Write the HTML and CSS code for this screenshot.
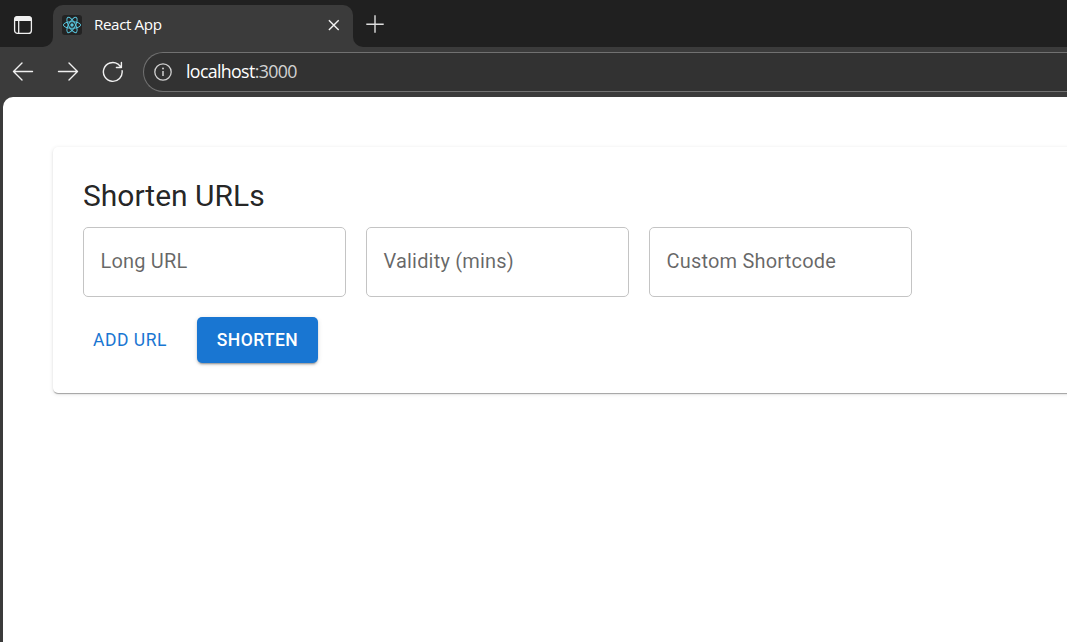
FILE: index.html
```
<!DOCTYPE html>
<html lang="en">
<head>
<meta charset="utf-8">
<title>React App</title>
<link rel="stylesheet" href="styles.css">
</head>
<body>
<div class="browser">
  <header class="tabstrip">
    <div class="tabstrip-start">
      <svg width="20" height="20" viewBox="0 0 20 20" fill="none" stroke="#f0f0f0" stroke-width="1.3">
        <rect x="1.6" y="1.6" width="16.8" height="16.8" rx="3"/>
        <path d="M2 2.8Q2.6 1.8 4 1.8H16Q17.6 1.8 18 3V5.4H2Z" fill="#f0f0f0"/>
        <path d="M5.7 6V18"/>
      </svg>
    </div>
    <div class="tab">
      <span class="favicon">
        <svg width="20" height="20" viewBox="0 0 20 20" fill="none" stroke="#58c4dc" stroke-width="1">
          <ellipse cx="10" cy="10" rx="8.6" ry="3.3"/>
          <ellipse cx="10" cy="10" rx="8.6" ry="3.3" transform="rotate(60 10 10)"/>
          <ellipse cx="10" cy="10" rx="8.6" ry="3.3" transform="rotate(120 10 10)"/>
          <circle cx="10" cy="10" r="1.7" fill="#58c4dc" stroke="none"/>
        </svg>
      </span>
      <span class="tab-title">React App</span>
      <svg width="12" height="12" viewBox="0 0 12 12" fill="none" stroke="#f2f2f2" stroke-width="1.4"><path d="M.9 1.2L10.7 11M10.7 1.2L.9 11"/></svg>
    </div>
    <div class="tabstrip-end">
      <svg width="18" height="18" viewBox="0 0 18 18" fill="none" stroke="#dedede" stroke-width="1.4"><path d="M9 .3V17.7M.3 9.3H17.7"/></svg>
    </div>
  </header>
  <nav class="toolbar">
    <svg width="22" height="20" viewBox="0 0 22 20" fill="none" stroke="#f0f0f0" stroke-width="1.4" stroke-linecap="round" stroke-linejoin="round"><path d="M20.5 9.5H1.5M10 1.1L1.5 9.5L10 17.9"/></svg>
    <svg width="22" height="20" viewBox="0 0 22 20" fill="none" stroke="#f0f0f0" stroke-width="1.4" stroke-linecap="round" stroke-linejoin="round"><path d="M1.5 9.5H20.5M12 1.1L20.5 9.5L12 17.9"/></svg>
    <svg width="22" height="22" viewBox="0 0 22 22" fill="none" stroke="#f0f0f0" stroke-width="1.4" stroke-linecap="round" stroke-linejoin="round"><path d="M20.1 9.6A9.4 9.4 0 1 1 16 3.1L19.2 6.3M19.4 1.5V6.5H14.4"/></svg>
    <div class="address">
      <svg width="18" height="18" viewBox="0 0 18 18" fill="none" stroke="#d0d0d0" stroke-width="1.3"><circle cx="9" cy="9" r="8.2"/><path d="M9 8V13" stroke-width="1.5"/><circle cx="9" cy="5.6" r="1" fill="#d0d0d0" stroke="none"/></svg>
      <span class="url">localhost<span class="port">:3000</span></span>
    </div>
  </nav>
  <main class="page">
    <section class="card">
      <h1 class="title">Shorten URLs</h1>
      <div class="fields">
        <div class="field"><span>Long URL</span></div>
        <div class="field"><span>Validity (mins)</span></div>
        <div class="field"><span>Custom Shortcode</span></div>
      </div>
      <div class="actions">
        <button class="btn btn-text">Add URL</button>
        <button class="btn btn-primary">Shorten</button>
      </div>
    </section>
  </main>
</div>
</body>
</html>
```
FILE: styles.css
```
* { box-sizing: border-box; }
body { margin: 0; overflow: hidden; font-family: Roboto, "Liberation Sans", sans-serif; }
svg { display: block; flex: none; }

.browser { display: flex; flex-direction: column; height: 642px; background: #3b3b3b; overflow: hidden; }

.tabstrip { display: flex; flex: none; height: 47px; background: linear-gradient(#202020 0 20px, #3b3b3b 20px); }
.tabstrip-start { width: 53px; padding: 15px 0 0 13px; background: #202020; border-bottom-right-radius: 10px; }
.tab {
  display: flex; align-items: center; width: 300px; margin-top: 5px; padding: 0 13px 2px 9px;
  background: #3b3b3b; border-radius: 10px 10px 0 0;
}
.favicon { width: 20px; height: 20px; border-radius: 3px; background: #232323; }
.tab-title { flex: 1; margin-left: 12px; padding-bottom: 2px; color: #fff; font: 15.2px/20px "Open Sans", "Noto Sans", sans-serif; letter-spacing: -0.4px; }
.tabstrip-end { flex: 1; padding: 15px 0 0 13px; background: #202020; border-bottom-left-radius: 10px; }

.toolbar { display: flex; flex: none; align-items: center; height: 50px; padding-left: 12px; gap: 23px; }
.address {
  display: flex; align-items: center; flex: 1; height: 40px; margin-left: -4px; padding-left: 10px; gap: 14px;
  background: #323232; border: 1px solid #717171; border-right: 0; border-radius: 20px 0 0 20px;
}
.url { padding-bottom: 2px; color: #fff; font: 17.8px/24px "Open Sans", "Noto Sans", sans-serif; letter-spacing: -0.65px; }
.port { color: #d2d2d2; }

.page { flex: 1; margin-left: 3px; padding: 50px 0 0 50px; background: #fff; border-top-left-radius: 10px; overflow: hidden; }
.card {
  width: 1200px; height: 246px; padding: 29px 30px 30px; border-radius: 5px; background: #fff;
  box-shadow: 0 2px 1px -1px rgba(0,0,0,.2), 0 1px 1px rgba(0,0,0,.14), 0 1px 4px rgba(0,0,0,.12);
}
.title { margin: 0 0 11px; color: rgba(0,0,0,.87); font-size: 30px; font-weight: 400; line-height: 40px; }
.fields { display: flex; gap: 20px; }
.field {
  width: 263px; height: 70px; padding: 18px 16.5px; border: 1px solid #c4c4c4; border-radius: 5px;
  color: rgba(0,0,0,.6); font-size: 20px; line-height: 30px; letter-spacing: .1876px;
}
.actions { display: flex; gap: 20px; margin-top: 20px; }
.btn {
  height: 46px; border: 0; border-radius: 5px; background: none; text-transform: uppercase;
  font: 500 17.5px/30px Roboto, sans-serif; letter-spacing: .5px;
}
.btn-text { width: 94px; padding: 0; color: #1976d2; font-weight: 400; }
.btn-primary {
  width: 121px; padding: 0; color: #fff; background: #1976d2; letter-spacing: .4px;
  box-shadow: 0 3px 1px -2px rgba(0,0,0,.2), 0 2px 2px rgba(0,0,0,.14), 0 1px 5px rgba(0,0,0,.12);
}
```
